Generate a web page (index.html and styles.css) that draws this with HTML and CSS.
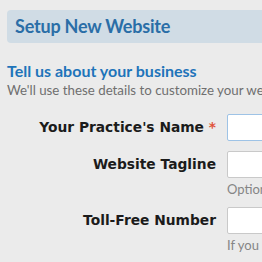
FILE: index.html
```html
<!DOCTYPE html>
<html lang="en">
<head>
  <meta charset="UTF-8" />
  <title>Setup New Website</title>
  <link rel="stylesheet" href="styles.css">
</head>
<body>
  <div class="page-title">
    <h1>Setup New Website</h1>
  </div>

  <div class="section">
    <h2>Tell us about your business</h2>
    <p class="intro">We'll use these details to customize your website for your practice.</p>

    <div class="field">
      <label for="name">Your Practice's Name <span class="req">*</span></label>
      <div class="control">
        <input id="name" type="text" class="focused">
      </div>
    </div>

    <div class="field">
      <label for="tagline">Website Tagline</label>
      <div class="control">
        <input id="tagline" type="text">
        <p class="help">Optional short phrase</p>
      </div>
    </div>

    <div class="field">
      <label for="phone">Toll-Free Number</label>
      <div class="control">
        <input id="phone" type="text">
        <p class="help">If you have one</p>
      </div>
    </div>
  </div>
</body>
</html>
```

FILE: styles.css
```css
:root {
  --bg: #ebebeb;
  --bar: #d0dce5;
  --blue: #2a6ea7;
  --blue-bright: #1e74ba;
  --text: #1b1b1b;
  --muted: #858585;
  --border: #c9c9c9;
}

* {
  margin: 0;
  padding: 0;
  box-sizing: border-box;
}

body {
  background: var(--bg);
  font-family: 'Lato', sans-serif;
  padding: 10px 0 0 7px;
  width: 600px;
}

.page-title {
  background: var(--bar);
  border-radius: 4px 0 0 4px;
  height: 33px;
  padding: 5px 0 0 8px;
}

.page-title h1 {
  font-size: 18px;
  font-weight: 700;
  letter-spacing: -0.2px;
  color: var(--blue);
  line-height: 23px;
}

.section {
  padding-top: 18px;
}

.section h2 {
  font-size: 16px;
  font-weight: 700;
  color: var(--blue-bright);
  line-height: 19px;
}

.intro {
  font-size: 13.3px;
  color: #6f6f6f;
  line-height: 16px;
  margin-top: 2px;
  white-space: nowrap;
}

.field {
  display: flex;
  align-items: flex-start;
  margin-top: 10px;
}

.field:first-of-type {
  margin-top: 16px;
}

.field label {
  width: 209px;
  text-align: right;
  font-family: 'DejaVu Sans', sans-serif;
  font-weight: 700;
  font-size: 13.8px;
  color: var(--text);
  line-height: 27px;
}

.req {
  color: #e0533a;
}

.control {
  margin-left: 11px;
}

.control input {
  display: block;
  width: 260px;
  height: 27px;
  border: 1px solid var(--border);
  border-radius: 2px;
  background: #fff;
}

.control input.focused {
  border-color: #9ec3e6;
}

.help {
  font-size: 13px;
  color: var(--muted);
  line-height: 16px;
  margin-top: 3px;
  white-space: nowrap;
}
```
